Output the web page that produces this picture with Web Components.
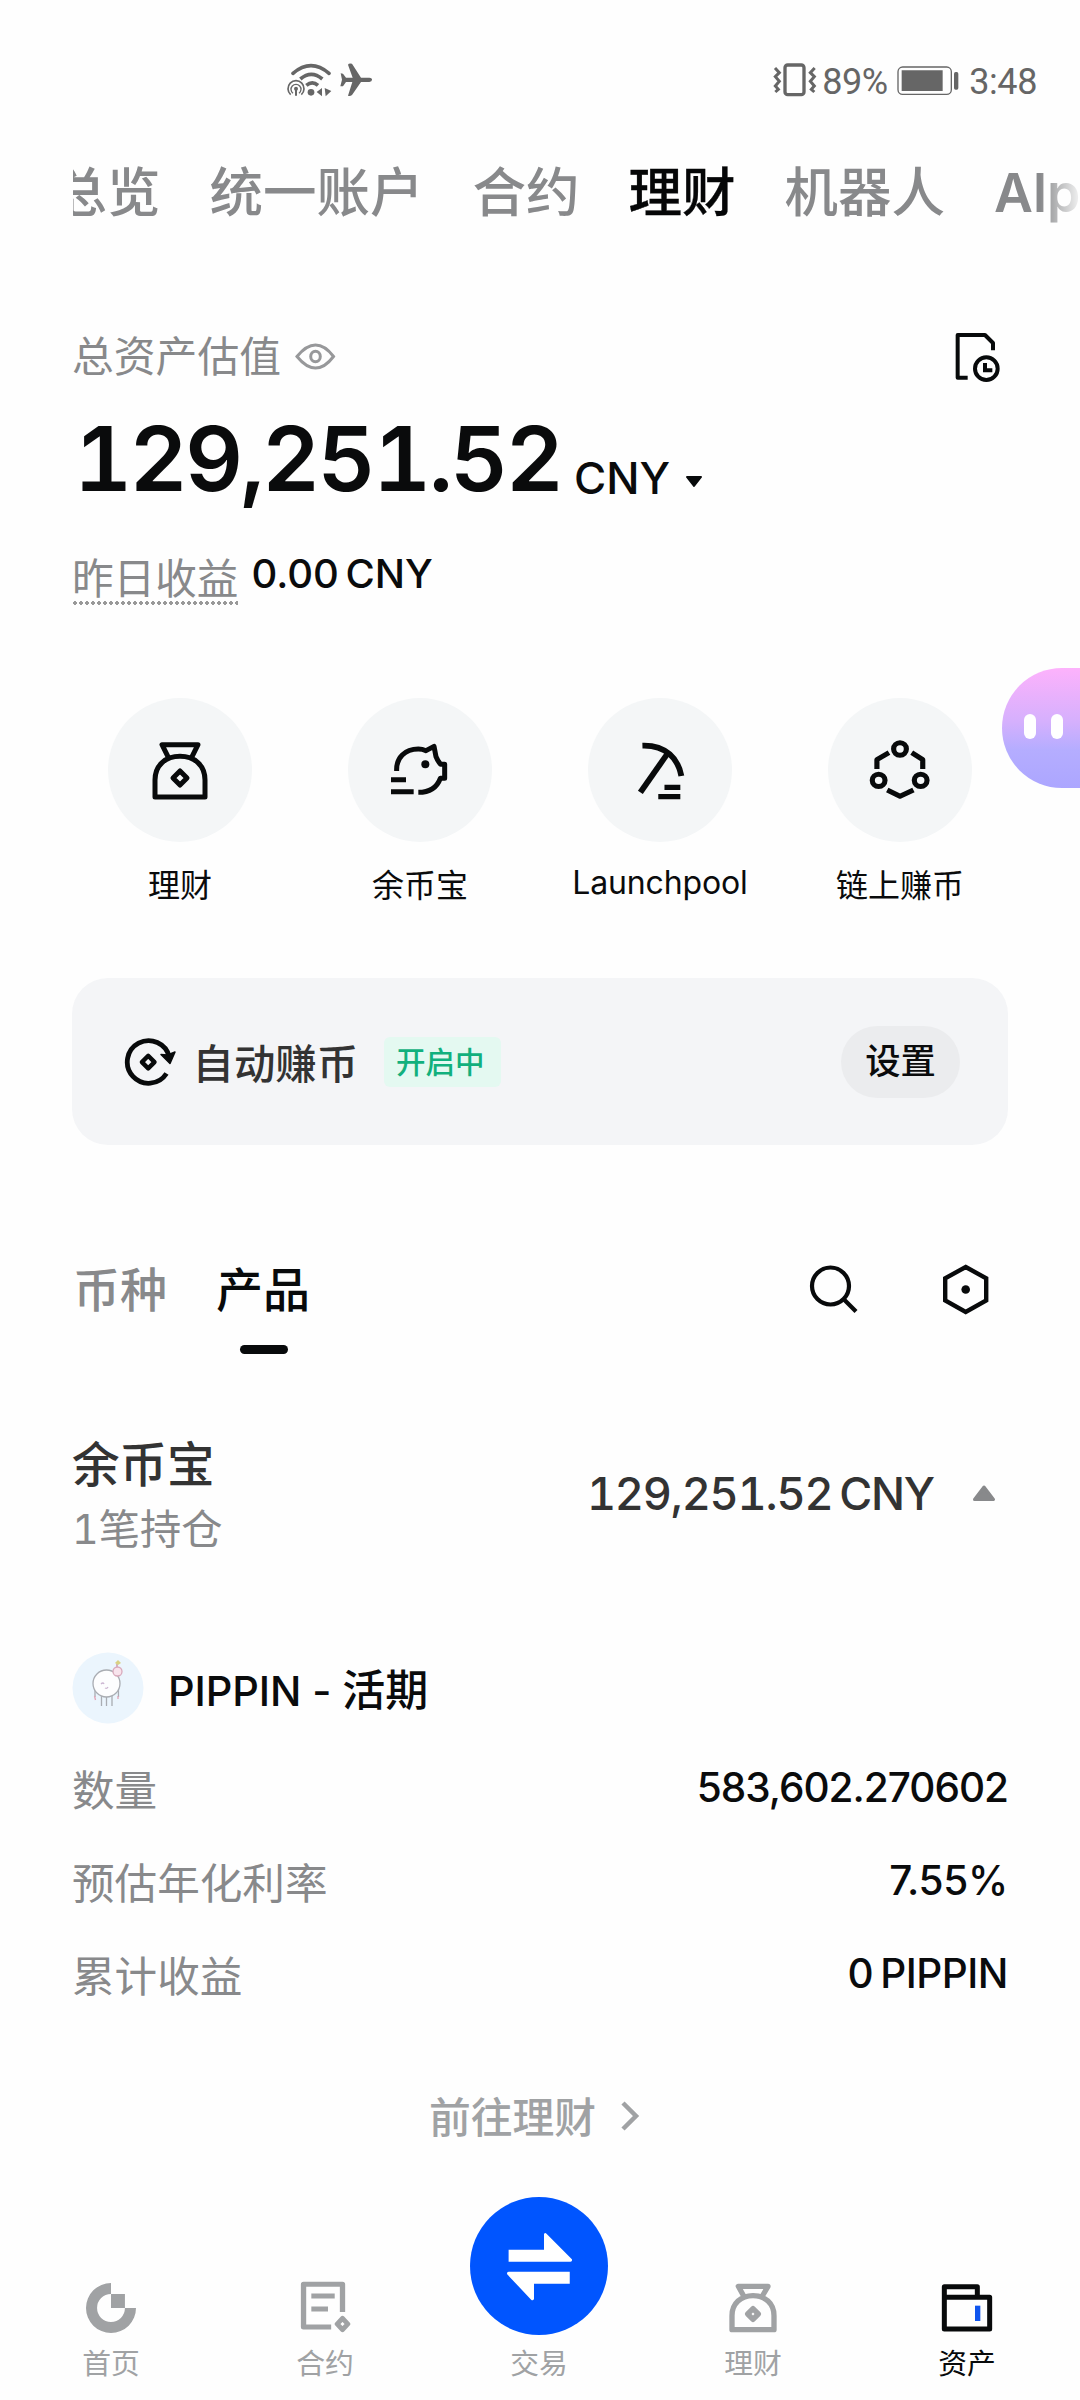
<!DOCTYPE html>
<html lang="zh-CN">
<head>
<meta charset="utf-8">
<title>资产</title>
<style>
  html, body { margin: 0; background: #fefefe; }
  body { font-family: Inter, "Noto Sans CJK SC", sans-serif; color: #0a0b0c; }
</style>
</head>
<body>
<wallet-app></wallet-app>
<script>
const define = (name, html) => {
  const template = document.createElement('template');
  template.innerHTML = '<style>*{box-sizing:border-box}svg{display:block;flex:none}</style>' + html;
  customElements.define(name, class extends HTMLElement {
    constructor() {
      super();
      this.attachShadow({ mode: 'open' }).append(template.content.cloneNode(true));
    }
  });
};

define('status-bar', `
<style>
  :host { display: flex; height: 160px; align-items: center; padding: 0 43px 0 285px; color: #666; font: 400 36px/40px Roboto, sans-serif; }
  .grow { flex: 1; }
  .pct { margin-left: 3px; width: 75px; }
  .time { margin-left: 10px; }
  span { white-space: nowrap; letter-spacing: -.4px; padding-top: 3px; }
</style>
<svg width="90" height="36" viewBox="45 35 270 108" fill="none" stroke="#666">
  <path d="M69 69Q123 23 177 69" stroke-width="11" stroke-linecap="round"/>
  <path d="M91 86Q124 58 157 86" stroke-width="11"/>
  <path d="M109 105Q127 90 144 105" stroke-width="11"/>
  <path d="M62 133A24 24 0 1 1 94 133" stroke-width="5"/>
  <path d="M69 129A15 15 0 1 1 87 129" stroke-width="4"/>
  <g fill="#666" stroke="none"><circle cx="78" cy="115" r="6"/><circle cx="123" cy="126" r="10"/>
  <path d="M75 116h6v20h-6zM140 125L156 113V138zM164 113L184 122 167 138z"/>
  <path d="M212 69L219 70 228 82 248 82 234 43Q236 38 246 40L273 82H298Q307 83 306 88 306 94 298 95H273L246 134Q240 139 234 136L247 95H228L219 108H211L216 88Z"/></g>
</svg>
<div class="grow"></div>
<svg width="46" height="36" viewBox="40 35 138 108" fill="none" stroke="#666" stroke-width="9">
  <rect x="76" y="44" width="57" height="89" rx="8" stroke-width="10"/>
  <path d="M46 53L59 67 47 79 59 93 47 107 56 117 47 125M165 53L152 67 164 79 152 93 164 107 155 117 164 125" stroke-width="9"/>
</svg>
<span class="pct">89%</span>
<svg width="62" height="36" viewBox="412 35 186 108" fill="none" stroke="#666">
  <rect x="415" y="50" width="160" height="82" rx="14" stroke-width="4"/>
  <path d="M426 60H549V122H426z" fill="#666" stroke="none"/>
  <rect x="583" y="65" width="13" height="53" rx="5" fill="#666" stroke="none"/>
</svg>
<span class="time">3:48</span>`);

define('account-tabs', `
<style>
  :host { display: block; margin-left: 73px; overflow: hidden; -webkit-mask: linear-gradient(90deg, #000 967px, transparent 1011px); mask: linear-gradient(90deg, #000 967px, transparent 1011px); }
  nav { display: flex; gap: 49px; margin-left: -19.500px; width: max-content; font: 500 53.500px/65px Inter, "Noto Sans CJK SC", sans-serif; color: #88898b; }
  ::slotted([aria-current]) { color: #050607; -webkit-text-stroke: .3px #050607; }
</style>
<nav><slot></slot></nav>`);

define('asset-summary', `
<style>
  :host { display: block; padding: 97px 72px 0; }
  .row { display: flex; align-items: center; }
  .head { height: 70px; font-size: 41.8px; line-height: 60px; color: #88898b; }
  .head svg:first-of-type { margin-left: 13px; }
  .head svg:last-of-type { margin: 2px 4px 0 auto; }
  .total { height: 134px; }
  .total b { font: 600 90px/100px Inter, sans-serif; font-feature-settings: "tnum"; letter-spacing: -2.700px; margin-left: 2px; width: 501px; white-space: nowrap; }
  .total span { font: 500 44px/50px Inter, sans-serif; margin: 38px 0 0 -1px; }
  .total svg { margin: 45px 0 0 15px; }
  .yest { height: 100px; align-items: flex-start; font-size: 41.6px; line-height: 46px; }
  .yest span { color: #88898b; margin-top: 30px; height: 49px; background: radial-gradient(circle, #999 1.6px, transparent 2px) 0 100%/6px 4px repeat-x; }
  .yest em { font: 500 40px/46px Inter, sans-serif; word-spacing: -4px; margin: 25px 0 0 13px; }
</style>
<div class="row head"><slot name="label"></slot>
  <svg width="42" height="30" viewBox="293.5 340.500 42 30" fill="none" stroke="#97989a" stroke-width="3"><path d="M296.500 355C303 347 308 343.500 315 343.500S327 347 333 355C327 363 322 366.500 315 366.500S303 363 296.500 355Z"/><ellipse cx="315" cy="355" rx="4.800" ry="5.300"/></svg>
  <svg width="50" height="54" viewBox="102 65 150 162" fill="none" stroke="#080a0b" stroke-width="12"><path d="M143 205H113V77H195L219 101V123" stroke-linejoin="round"/><circle cx="199" cy="178" r="34"/><path d="M195 161V183H217"/></svg>
</div>
<div class="row total"><b><slot name="amount"></slot></b><span><slot name="unit"></slot></span>
  <svg width="18" height="12" viewBox="0 0 18 12"><path d="M2 1H16L9 10Z" fill="#080a0b" stroke="#080a0b" stroke-width="2" stroke-linejoin="round"/></svg></div>
<div class="row yest"><span><slot name="ylabel"></slot></span><em><slot name="yvalue"></slot></em></div>`);

define('quick-action', `
<style>
  :host { display: flex; flex-direction: column; align-items: center; width: 240px; height: 208px; font-size: 32px; line-height: 42px; white-space: nowrap; }
  .disc { width: 144px; height: 144px; border-radius: 50%; background: #f4f6f7; }
  .label { margin-top: var(--label-gap, 22.500px); letter-spacing: var(--track, 0); }
</style>
<div class="disc"><slot name="icon"></slot></div>
<div class="label"><slot></slot></div>`);

define('auto-earn', `
<style>
  :host { display: flex; align-items: center; height: 167px; margin: 72px 72px 0; padding: 0 48px 0 52px; border-radius: 36px; background: #f4f5f7; }
  .name { font: 500 41.400px/50px Inter, "Noto Sans CJK SC", sans-serif; color: #333; margin-left: 15.500px; padding-top: 4px; }
  .tag { margin-left: 26px; height: 50px; padding: 0 16px 0 12px; border-radius: 6px; background: #e4f9f1; color: #12b07d; font: 500 29.500px/51px Inter, "Noto Sans CJK SC", sans-serif; }
  .set { margin-left: auto; height: 72px; width: 119px; text-align: center; border-radius: 36px; background: #ebecee; font: 500 35.300px/72px Inter, "Noto Sans CJK SC", sans-serif; }
</style>
<svg width="53" height="50" viewBox="124 1038 53 50" fill="none" stroke="#080a0b" stroke-width="4.800">
  <path d="M166.500 1074.500A21.300 21.300 0 1 1 169.300 1058"/>
  <path d="M161 1055.500L167.500 1056 175 1053 170 1064.500Z" fill="#080a0b" stroke-width="1.500" stroke-linejoin="round"/>
  <path d="M148.200 1056.800L154.500 1063.100 148.200 1069.400 141.900 1063.100Z" stroke-width="4.400" stroke-linejoin="round"/></svg>
<div class="name"><slot></slot></div><div class="tag"><slot name="state"></slot></div><div class="set"><slot name="action"></slot></div>`);

define('view-tabs', `
<style>
  :host { display: flex; align-items: center; justify-content: space-between; margin: 104px 72px 0; height: 80px; }
  nav { display: flex; gap: 49px; font: 500 47px/79px Inter, "Noto Sans CJK SC", sans-serif; color: #88898b; padding-left: 1px; }
  .on { color: #080a0b; position: relative; }
  .on::after { content: ""; position: absolute; left: 50%; margin-left: -23px; top: 95px; width: 48px; height: 9px; border-radius: 5px; background: #080a0b; }
  .tools { display: flex; gap: 82px; margin-right: 17px; }
</style>
<nav><span><slot name="off"></slot></span><span class="on"><slot name="on"></slot></span></nav>
<div class="tools">
  <svg width="50" height="52" viewBox="809 1263 50 52" fill="none" stroke="#080a0b" stroke-width="4.200"><circle cx="830.500" cy="1286" r="18.500"/><path d="M843.500 1299L856 1311.500"/></svg>
  <svg width="50" height="52" viewBox="941 1263 50 52" fill="none" stroke="#080a0b" stroke-width="4.400"><path d="M965.700 1267L986.200 1278.300V1300.500L965.700 1312 945.200 1300.500V1278.300Z"/><circle cx="965.700" cy="1289.500" r="4.300" fill="#080a0b" stroke="none"/></svg>
</div>`);

define('holding-group', `
<style>
  :host { display: flex; margin: 110px 72px 0; height: 112px; color: #333; }
  .name { font: 500 47.500px/52px Inter, "Noto Sans CJK SC", sans-serif; }
  .count { font-size: 41.300px; line-height: 44px; color: #88898b; margin-top: 16px; font-feature-settings: "tnum"; }
  .sum { margin-left: auto; font: 500 45px/110px Inter, sans-serif; font-feature-settings: "tnum"; letter-spacing: -1.200px; word-spacing: -4px; white-space: pre; }
  svg { margin: 44px 11px 0 37px; }
</style>
<div><div class="name"><slot></slot></div><div class="count"><slot name="count"></slot></div></div>
<div class="sum"><slot name="sum"></slot></div>
<svg width="26" height="20" viewBox="0 0 26 20"><path d="M13 4L22.500 16.500H3.500Z" fill="#88898b" stroke="#88898b" stroke-width="3" stroke-linejoin="round"/></svg>`);

define('product-card', `
<style>
  :host { display: block; margin: 98px 72px 0; }
  .title { display: flex; align-items: center; height: 78px; gap: 24px; font: 500 41.500px/50px Inter, "Noto Sans CJK SC", sans-serif; padding-bottom: 1px; }
  .title span { padding-top: 6px; letter-spacing: -.1px; }
  .rows { margin-top: 16.500px; }
</style>
<div class="title">
  <svg width="72" height="72" viewBox="72 1652 72 72" fill="none" stroke="#a9acb2" stroke-width="1.300">
    <circle cx="108" cy="1688" r="35.500" fill="#ebf5fd" stroke="none"/>
    <path d="M117 1664v4" stroke="#c98ba0"/><path d="M115 1663l3-3 3 3-3 2z" fill="#d9d183" stroke="none"/>
    <path d="M101.500 1696v10M106.500 1697v9M112 1696v10M95 1684v13M117 1681q2 8 1.500 16"/>
    <circle cx="106.500" cy="1683.500" r="13.500" fill="#fdfdfe"/>
    <circle cx="117.500" cy="1671.500" r="4.500" fill="#f8e3ec" stroke="#d8a9bb"/>
    <path d="M101 1684q2-2 3 0M105 1688q2 1 3-1" stroke="#ccb6d2"/>
    <path d="M94.500 1696l1 4M118 1696v3" stroke="#e2a4b6"/>
  </svg>
  <span><slot name="title"></slot></span></div>
<div class="rows"><slot></slot></div>`);

define('info-row', `
<style>
  :host { display: flex; justify-content: space-between; height: 93.200px; line-height: 88px; }
  .k { font-size: 42.600px; color: #88898b; padding-top: 3px; }
  .v { font-weight: 500; font-size: 40.500px; letter-spacing: var(--track, -1px); word-spacing: -3px; }
</style>
<div class="k"><slot></slot></div><div class="v"><slot name="value"></slot></div>`);

define('earn-link', `
<style>
  :host { display: flex; justify-content: center; align-items: center; margin-top: 65px; height: 60px; padding-right: 9px; color: #a0a2a4; font: 500 41.800px/60px Inter, "Noto Sans CJK SC", sans-serif; gap: 22px; }
  svg { margin-bottom: 3px; }
</style>
<slot></slot><svg width="24" height="34" viewBox="0 0 24 34" fill="none" stroke="#a0a2a4" stroke-width="4.500"><path d="M5 3L18 16 5 29"/></svg>`);

define('tab-item', `
<style>
  :host { display: flex; flex-direction: column; align-items: center; width: 214px; color: #a0a2a4; font: 400 28.800px/36px Inter, "Noto Sans CJK SC", sans-serif; }
  .icon { height: 138px; display: flex; align-items: flex-end; }
  .label { margin-top: 11px; }
</style>
<div class="icon"><slot name="icon"></slot></div><div class="label"><slot></slot></div>`);

define('bottom-nav', `
<style>
  :host { display: flex; justify-content: center; padding-right: 2px; margin-top: 49px; }
</style><slot></slot>`);

define('assistant-blob', `
<style>
  :host { position: absolute; right: 0; top: 668px; width: 78px; height: 120px; border-radius: 60px 0 0 60px; background: linear-gradient(#fdb2fc, #d5b0fd 45%, #b5adff 68%, #aca6ff); }
  div { display: flex; gap: 15px; padding: 46px 0 0 21.500px; }
  i { width: 12px; height: 25px; border-radius: 6px; background: #fff; }
</style><div><i></i><i></i></div>`);

define('wallet-app', `
<style>
  :host { display: flex; flex-direction: column; position: relative; width: 1080px; height: 2400px; overflow: hidden; background: #fefefe; }
  .quick { display: flex; padding: 72px 60px 0; }
  svg.q { width: 144px; height: 144px; fill: none; stroke: #080a0b; stroke-width: 15; }
  svg.s { margin-bottom: 2px; }
</style>
<status-bar></status-bar>
<account-tabs><span>总览</span><span>统一账户</span><span>合约</span><span aria-current="page">理财</span><span>机器人</span><span style="font-weight:600">Alp</span></account-tabs>
<asset-summary><span slot="label">总资产估值</span><span slot="amount">129,251.52</span><span slot="unit">CNY</span><span slot="ylabel">昨日收益</span><span slot="yvalue">0.00 CNY</span></asset-summary>
<div class="quick">
  <quick-action>理财<svg class="q" slot="icon" viewBox="84 114 432 432"><g stroke-linejoin="round"><path d="M265 292L246 254H354L335 292"/><path d="M225 411V360C225 315 257 289 300 289S375 315 375 360V411Z"/><path d="M300 333L321 354 300 375 279 354Z"/></g></svg></quick-action>
  <quick-action>余币宝<svg class="q" slot="icon" viewBox="804 114 432 432"><path d="M950 333C948 293 975 267 1015 267Q1027 267 1038 272L1062 259 1068 290Q1073 303 1082 313H1094V355H1081C1070 385 1045 397 1015 397" stroke-linejoin="round"/><path d="M933 359H978M933 395H1001"/><circle cx="1036" cy="313" r="12" fill="#080a0b" stroke="none"/></svg></quick-action>
  <quick-action style="--label-gap:20px;--track:-.15px">Launchpool<svg class="q" slot="icon" viewBox="138 177 418 432" preserveAspectRatio="none"><path d="M296 320C365 318 400 360 409 411" stroke-width="17"/><path d="M368 345L290 460" stroke-width="17"/><path d="M360 445H406M342 473H406" stroke-width="16"/></svg></quick-action>
  <quick-action>链上赚币<svg class="q" slot="icon" viewBox="837 177 418 432" preserveAspectRatio="none"><circle cx="1046" cy="330" r="18.500"/><circle cx="984" cy="424" r="18.500"/><circle cx="1106" cy="424" r="18.500"/><path d="M1014 341L979 362V390M1080 341L1112 362V390M1009 453L1046 472 1085 453" stroke-linejoin="round"/></svg></quick-action>
</div>
<auto-earn>自动赚币<span slot="state">开启中</span><span slot="action">设置</span></auto-earn>
<view-tabs><span slot="off">币种</span><span slot="on">产品</span></view-tabs>
<holding-group>余币宝<span slot="count">1笔持仓</span><span slot="sum">129,251.52 CNY</span></holding-group>
<product-card><span slot="title">PIPPIN - <span style="font-size:43px">活期</span></span>
  <info-row>数量<span slot="value">583,602.270602</span></info-row>
  <info-row style="--track:-.3px">预估年化利率<span slot="value">7.55%</span></info-row>
  <info-row style="--track:-.5px">累计收益<span slot="value">0 PIPPIN</span></info-row>
</product-card>
<earn-link>前往理财</earn-link>
<bottom-nav>
  <tab-item>首页<svg class="s" slot="icon" width="50" height="50" viewBox="132 642 140 150" preserveAspectRatio="none" fill="#a0a2a4"><path d="M202 642A70 75 0 1 0 272 717H241A39 42 0 1 1 202 675ZM202 675h39v42h-39z"/></svg></tab-item>
  <tab-item>合约<svg class="s" slot="icon" width="51" height="52" viewBox="727 642 144 156" preserveAspectRatio="none" fill="none" stroke="#a0a2a4" stroke-width="15"><path d="M815 780H737V652H847V735M759 687H825M759 726H806" stroke-linejoin="round"/><path d="M847 754L862 771 847 788 832 771Z" stroke-width="14" stroke-linejoin="round"/></svg></tab-item>
  <tab-item>交易<svg slot="icon" width="138" height="138" viewBox="1204 383 386 414" preserveAspectRatio="none"><ellipse cx="1397" cy="590" rx="193" ry="207" fill="#0055ff"/><path d="M1312 541H1411V494Q1414 489 1418 493L1489 570Q1491 576 1485 577H1312ZM1483 643H1383V689Q1380 695 1375 691L1308 615Q1306 608 1312 607H1483Z" fill="#fff"/></svg></tab-item>
  <tab-item>理财<svg class="s" slot="icon" width="52" height="50" viewBox="381 312 156 150" fill="none" stroke="#a0a2a4" stroke-width="16" stroke-linejoin="round"><path d="M431 351L415 322H504L487 351M396 452V410C396 373 423 350 459 350S522 373 522 410V452Z"/><path d="M459 389L475 405 459 421 443 405Z"/></svg></tab-item>
  <tab-item style="color:#080a0b">资产<svg class="s" slot="icon" width="52" height="50" viewBox="1023 312 156 150" fill="none" stroke="#080a0b" stroke-width="15" stroke-linejoin="round"><path d="M1033 355V323H1132V355M1033 355H1169V450H1033Z"/><path d="M1125 380h16v46h-16z" fill="#0f55ee" stroke="none"/></svg></tab-item>
</bottom-nav>
<assistant-blob></assistant-blob>`);
</script>
</body>
</html>
